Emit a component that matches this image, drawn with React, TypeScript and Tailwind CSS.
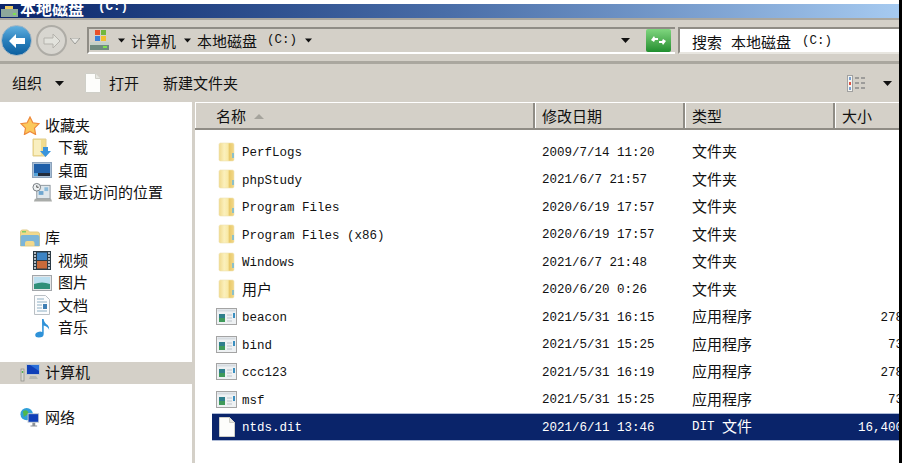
import type { ReactNode } from 'react'

const cjk = '[font-family:"Noto_Sans_CJK_SC","Liberation_Sans",sans-serif]'
const mono = '[font-family:"Liberation_Mono","Noto_Sans_CJK_SC",monospace]'

function Arrow({ className = '' }: { className?: string }) {
  return (
    <svg width="9" height="5" viewBox="0 0 9 5" className={className}>
      <path d="M0 0h9L4.5 5z" fill="#111" />
    </svg>
  )
}

// the (C:) part of the drive name is drawn in the narrow latin face
function DriveLetter({ className = '' }: { className?: string }) {
  return <span className={`whitespace-pre text-[12.5px] leading-none text-[#111] ${mono} ${className}`}>(C:)</span>
}

function Folder() {
  return (
    <svg width="17" height="20" viewBox="0 0 17 20">
      <defs>
        <linearGradient id="fold" x1="0" y1="0" x2="1" y2="0">
          <stop offset="0" stopColor="#f0d98c" />
          <stop offset="0.35" stopColor="#fbf0bc" />
          <stop offset="0.62" stopColor="#f8e8a4" />
          <stop offset="0.66" stopColor="#e8c868" />
          <stop offset="1" stopColor="#f2d88a" />
        </linearGradient>
      </defs>
      <path d="M1 2.500q0-1.500 1.500-1.500h12q1.500 0 1.500 1.500v15q0 1.500-1.500 1.500h-12Q1 19 1 17.500z" fill="url(#fold)" stroke="#efe3b4" strokeWidth="0.6" />
      <rect x="14" y="11" width="2" height="5" fill="#8cc0c8" />
    </svg>
  )
}

function Exe() {
  return (
    <svg width="21" height="17" viewBox="0 0 21 17">
      <rect x="0.5" y="0.5" width="20" height="16" fill="#eef1f3" stroke="#a4a4a4" />
      <rect x="1.500" y="1.500" width="18" height="2" fill="#d6dce1" />
      <rect x="3" y="6" width="6" height="8" fill="#2f7f8c" />
      <rect x="3" y="10" width="6" height="4" fill="#3f9a5a" />
      <path d="M11 7h5M11 10h5M11 13h5" stroke="#bcc3ca" />
      <rect x="17" y="5" width="2" height="5" fill="#3a8fc0" />
    </svg>
  )
}

function Doc() {
  return (
    <svg width="16" height="20" viewBox="0 0 16 20">
      <path d="M0.5 0.5h10l5 5v14h-15z" fill="#fdfdfb" stroke="#cfcfc8" />
      <path d="M10.5 0.5v5h5" fill="#e6e6e0" stroke="#cfcfc8" />
    </svg>
  )
}

function NavIcon({ name }: { name: string }) {
  switch (name) {
    case 'star':
      return (
        <svg width="20" height="19" viewBox="0 0 20 19">
          <path d="M10 1l2.800 5.800 6.200.9-4.500 4.400 1.100 6.400L10 15.400l-5.600 3.100 1.100-6.400L1 7.700l6.200-.9z" fill="#fbc95c" stroke="#ee8a3c" strokeWidth="1.200" />
        </svg>
      )
    case 'download':
      return (
        <svg width="20" height="20" viewBox="0 0 20 20">
          <path d="M1 1h13v17H1z" fill="#f2dc8e" stroke="#e0cd8c" />
          <path d="M2 2h7v15H2z" fill="#f9efc0" />
          <path d="M11 9h5v4h3l-5.500 6L8 13h3z" fill="#3a94dc" />
        </svg>
      )
    case 'desktop':
      return (
        <svg width="20" height="17" viewBox="0 0 20 17">
          <rect x="0.5" y="0.5" width="19" height="15" fill="#a9c0d8" stroke="#8da3bb" />
          <rect x="2" y="2" width="16" height="12" fill="#1f5fa8" />
          <rect x="2" y="11" width="16" height="3" fill="#222c3c" />
          <rect x="2" y="11" width="4" height="3" fill="#4fa0d8" />
        </svg>
      )
    case 'recent':
      return (
        <svg width="21" height="21" viewBox="0 0 21 21">
          <rect x="5" y="3" width="14" height="14" fill="#dfe7ec" stroke="#8e979e" />
          <circle cx="5" cy="5" r="4" fill="#eef1f2" stroke="#73797e" />
          <path d="M5 3v2h2" stroke="#444" fill="none" />
          <rect x="7" y="9" width="5" height="4" fill="#6fa6cf" />
          <rect x="13" y="5" width="4" height="4" fill="#8cbbda" />
          <path d="M3 17h17l1 3H2z" fill="#a9aca9" />
        </svg>
      )
    case 'library':
      return (
        <svg width="20" height="18" viewBox="0 0 20 18">
          <path d="M0.5 3q0-2 2-2h5l2 2h8q2 0 2 2v12H.5z" fill="#f2d98b" stroke="#e0cb88" />
          <path d="M0.5 17V8q0-2 2-2h15q2 0 2 2v9h-5v-3q0-2-2-2H7q-2 0-2 2v3z" fill="#7cb5d8" />
          <rect x="2" y="2" width="4" height="1.500" fill="#7fce6a" />
        </svg>
      )
    case 'video':
      return (
        <svg width="18" height="19" viewBox="0 0 18 19">
          <rect width="18" height="19" fill="#2b3a44" />
          <rect x="4" y="1.500" width="10" height="7.500" fill="#3d84c4" />
          <rect x="4" y="10" width="10" height="7.500" fill="#c86a3a" />
          <path d="M1 2h2M1 5h2M1 8h2M1 11h2M1 14h2M1 17h2M15 2h2M15 5h2M15 8h2M15 11h2M15 14h2M15 17h2" stroke="#dfe8ee" strokeWidth="1.300" />
        </svg>
      )
    case 'picture':
      return (
        <svg width="20" height="16" viewBox="0 0 20 16">
          <rect x="0.5" y="0.5" width="19" height="15" fill="#e4e6e8" stroke="#a2a6aa" />
          <rect x="2" y="2" width="16" height="12" fill="#bcdff0" />
          <path d="M2 9q8-3 16 0v5H2z" fill="#2f8f7a" />
        </svg>
      )
    case 'document':
      return (
        <svg width="16" height="20" viewBox="0 0 16 20">
          <path d="M0.5 0.5h11l4 4v15H.5z" fill="#fbfcfd" stroke="#b9bfc4" />
          <path d="M3 4h7M3 7h10M3 10h5M3 13h5M3 16h10" stroke="#8fb0c4" />
          <rect x="9" y="9" width="4" height="5" fill="#3f7fb4" />
        </svg>
      )
    case 'music':
      return (
        <svg width="17" height="20" viewBox="0 0 17 20">
          <path d="M8 1h1.600q.6 4 4 6 2 2 1.600 5-1-3.500-5.500-4.500V16q0 3.500-5 3.500-3.500 0-3.500-2.500 0-3 5-3.500 1 0 2 .5z" fill="#2f92d8" />
        </svg>
      )
    case 'computer':
      return (
        <svg width="20" height="19" viewBox="0 0 20 19">
          <rect x="1" y="6" width="3" height="12" fill="#d9d9d2" stroke="#8a8a84" strokeWidth="0.7" />
          <rect x="1.800" y="8" width="1.400" height="2" fill="#58b050" />
          <rect x="6" y="1" width="14" height="11" fill="#bcc6cf" />
          <rect x="7" y="2" width="12" height="9" fill="#0f3fb8" />
          <path d="M10 2h9v6z" fill="#2a6fd8" />
          <path d="M10 13h6l2 3H9z" fill="#b5b7b2" />
        </svg>
      )
    default:
      return (
        <svg width="21" height="21" viewBox="0 0 21 21">
          <circle cx="7" cy="7" r="6.500" fill="#2f9fd8" />
          <path d="M3 4q3-2 5 0t-1 4-3 2zM8 10q3-1 4 1l-3 2z" fill="#4fb84c" />
          <rect x="8" y="6" width="12" height="10" fill="#bcc6cf" />
          <rect x="9" y="7" width="10" height="8" fill="#0f3fb8" />
          <path d="M13 16h3v3h2v1h-7v-1h2z" fill="#8b9096" />
        </svg>
      )
  }
}

function NavRow({ icon, label, sub, active }: { icon: string; label: string; sub?: boolean; active?: boolean }) {
  return (
    <div className={`flex h-[22.5px] items-center ${active ? 'bg-[#d4d0c8]' : ''} ${sub ? 'pl-8' : 'pl-5'}`}>
      <span className="flex w-5 justify-center">
        <NavIcon name={icon} />
      </span>
      <span className={`${sub ? 'ml-[6px]' : 'ml-[5px]'} pb-[2px] text-[15px] leading-none text-[#111]`}>{label}</span>
    </div>
  )
}

type FileRow = {
  name: string
  date: string
  type: string
  typePrefix?: string
  size?: string
  kind: 'folder' | 'exe' | 'doc'
  selected?: boolean
}

const files: FileRow[] = [
  { name: 'PerfLogs', date: '2009/7/14 11:20', type: '文件夹', kind: 'folder' },
  { name: 'phpStudy', date: '2021/6/7 21:57', type: '文件夹', kind: 'folder' },
  { name: 'Program Files', date: '2020/6/19 17:57', type: '文件夹', kind: 'folder' },
  { name: 'Program Files (x86)', date: '2020/6/19 17:57', type: '文件夹', kind: 'folder' },
  { name: 'Windows', date: '2021/6/7 21:48', type: '文件夹', kind: 'folder' },
  { name: '用户', date: '2020/6/20 0:26', type: '文件夹', kind: 'folder' },
  { name: 'beacon', date: '2021/5/31 16:15', type: '应用程序', size: '278', kind: 'exe' },
  { name: 'bind', date: '2021/5/31 15:25', type: '应用程序', size: '73', kind: 'exe' },
  { name: 'ccc123', date: '2021/5/31 16:19', type: '应用程序', size: '278', kind: 'exe' },
  { name: 'msf', date: '2021/5/31 15:25', type: '应用程序', size: '73', kind: 'exe' },
  { name: 'ntds.dit', date: '2021/6/11 13:46', type: '文件', typePrefix: 'DIT ', size: '16,400', kind: 'doc', selected: true },
]

function HeaderCell({ width, children }: { width: string; children: ReactNode }) {
  return (
    <div className={`flex h-full shrink-0 items-center border-l border-r-2 border-l-white border-r-[#8f8c85] pl-[6px] pt-[2px] text-[15px] ${width}`}>
      {children}
    </div>
  )
}

export default function App() {
  return (
    <div className="flex h-[463px] w-[902px] overflow-hidden bg-white">
      <div className={`flex h-full w-[899px] shrink-0 flex-col overflow-hidden ${cjk}`}>
        {/* title bar */}
        <div className="mt-1 flex h-[14px] shrink-0 items-center overflow-hidden bg-gradient-to-r from-[#0a246a] via-[#4a6ea8] to-[#a6caf0]">
          <svg width="17" height="11" viewBox="0 0 17 11" className="ml-[1px] shrink-0">
            <rect x="4" y="0" width="8" height="3" fill="#e8c860" />
            <rect x="0" y="3" width="17" height="8" fill="#8ea89c" />
            <rect x="12" y="7" width="3" height="2" fill="#7ce050" />
          </svg>
          <span className="-mt-[7px] ml-[2px] whitespace-pre text-[16px] font-bold leading-none text-white">本地磁盘</span>
          <span className={`-mt-[7px] ml-[14px] whitespace-pre text-[12.5px] font-bold leading-none text-white ${mono}`}>(C:)</span>
        </div>

        {/* address bar */}
        <div className="flex h-[46px] shrink-0 items-center border-b-[3px] border-t-[2px] border-b-[#aaa79f] border-t-[#aaa79f] bg-[#d4d0c8]">
          <div className="ml-[1px] flex h-[31px] w-[31px] shrink-0 items-center justify-center rounded-full border border-[#9fb4c4] bg-gradient-to-b from-[#5fb0e0] via-[#2a80bc] to-[#0a5f9f]">
            <svg width="18" height="16" viewBox="0 0 18 16"><path d="M8 1L1 8l7 7v-4h9V5H8z" fill="#fff" /></svg>
          </div>
          <div className="ml-[4px] flex h-[31px] w-[31px] shrink-0 items-center justify-center rounded-full border-2 border-[#aeaca6] bg-[#d8d6d0]">
            <svg width="18" height="16" viewBox="0 0 18 16"><path d="M10 1l7 7-7 7v-4H1V5h9z" fill="#e2e2dc" stroke="#b4b2ac" /></svg>
          </div>
          <svg width="10" height="6" viewBox="0 0 10 6" className="ml-[3px] shrink-0"><path d="M0 0h10L5 6z" fill="#e8e8e4" stroke="#9b9b96" /></svg>
          <div className="ml-[7px] flex h-[27px] w-[559px] shrink-0 items-center border-b-2 border-l-2 border-t-2 border-b-white border-l-[#8f8c85] border-t-[#8f8c85]">
            <svg width="21" height="21" viewBox="0 0 21 21" className="shrink-0">
              <rect x="6" y="0" width="5" height="5" fill="#e8502a" />
              <rect x="12" y="0" width="5" height="5" fill="#70b840" />
              <rect x="6" y="6" width="5" height="5" fill="#3a80d8" />
              <rect x="12" y="6" width="5" height="5" fill="#f2c030" />
              <rect x="1" y="12" width="19" height="8" fill="#6f8a80" />
              <rect x="1" y="12" width="19" height="3" fill="#c4d0c8" />
              <rect x="14" y="16" width="4" height="2" fill="#7ce050" />
            </svg>
            <Arrow className="ml-[8px] w-[7px] shrink-0" />
            <span className="ml-[6px] pb-[1px] text-[15px] leading-none text-[#111]">计算机</span>
            <Arrow className="ml-[8px] w-[7px] shrink-0" />
            <span className="ml-[6px] pb-[1px] whitespace-nowrap text-[15px] leading-none text-[#111]">本地磁盘</span>
            <DriveLetter className="ml-[10px]" />
            <Arrow className="ml-[8px] w-[7px] shrink-0" />
            <Arrow className="ml-auto mr-[16px] w-[9px] shrink-0" />
          </div>
          <div className="flex h-[27px] w-[29px] shrink-0 items-center border-b-2 border-t-2 border-b-white border-t-[#8f8c85]">
            <div className="flex h-[23px] w-[25px] items-center justify-center rounded-[2px] bg-gradient-to-b from-[#7fd67f] to-[#1f8f2f]">
              <svg width="17" height="13" viewBox="0 0 17 13">
                <path d="M1 6l3-4 1 2h3v2H5l-1 2zM16 7l-3 4-1-2H9V7h3l1-2z" fill="#fff" />
              </svg>
            </div>
          </div>
          <div className="ml-[3px] flex h-[27px] min-w-0 flex-1 items-center border-b-2 border-l-2 border-t-2 border-b-[#e8e6e0] border-l-[#8f8c85] border-t-[#8f8c85] bg-white pl-[12px] pt-[1px]">
            <span className="text-[15px] leading-none text-[#111]">搜索</span>
            <span className="ml-[9px] text-[15px] leading-none text-[#111]">本地磁盘</span>
            <DriveLetter className="ml-[11px]" />
          </div>
        </div>

        {/* command bar */}
        <div className="flex h-[38px] shrink-0 items-center bg-[#d4d0c8] text-[15px] text-[#111]">
          <span className="ml-3">组织</span>
          <Arrow className="ml-[13px]" />
          <span className="ml-[21px]"><Doc /></span>
          <span className="ml-[8px]">打开</span>
          <span className="ml-[24px]">新建文件夹</span>
          <svg width="19" height="19" viewBox="0 0 19 19" className="ml-auto">
            <rect x="0.5" y="1.500" width="5" height="16" fill="#f4f4f0" stroke="#a0a0a0" />
            <rect x="2" y="3" width="2" height="3" fill="#7a9fd0" />
            <rect x="2" y="8" width="2" height="3" fill="#e05040" />
            <rect x="2" y="13" width="2" height="3" fill="#7a9fd0" />
            <path d="M8 4h4M14 4h4M8 9h4M14 9h4M8 14h4M14 14h4" stroke="#8a8a8a" strokeWidth="1.500" />
          </svg>
          <Arrow className="ml-[17px] mr-[7px]" />
        </div>

        <div className="flex min-h-0 flex-1">
          {/* nav pane */}
          <div className="w-[192px] shrink-0 pt-3">
            <NavRow icon="star" label="收藏夹" />
            <NavRow icon="download" label="下载" sub />
            <NavRow icon="desktop" label="桌面" sub />
            <NavRow icon="recent" label="最近访问的位置" sub />
            <div className="h-[22.5px]" />
            <NavRow icon="library" label="库" />
            <NavRow icon="video" label="视频" sub />
            <NavRow icon="picture" label="图片" sub />
            <NavRow icon="document" label="文档" sub />
            <NavRow icon="music" label="音乐" sub />
            <div className="h-[22.5px]" />
            <NavRow icon="computer" label="计算机" active />
            <div className="h-[22.5px]" />
            <NavRow icon="network" label="网络" />
          </div>
          <div className="w-[3px] shrink-0 bg-[#d4d0c8]" />

          {/* file list */}
          <div className="min-w-0 flex-1 overflow-hidden">
            <div className="flex h-[28px] border-b-2 border-t border-b-[#8f8c85] border-t-white bg-[#d4d0c8] text-[#111]">
              <HeaderCell width="w-[340px] pl-[20px]">
                <span>名称</span>
                <svg width="10" height="5" viewBox="0 0 10 5" className="ml-[8px]"><path d="M5 0l5 5H0z" fill="#a5a39c" /></svg>
              </HeaderCell>
              <HeaderCell width="w-[150px]">修改日期</HeaderCell>
              <HeaderCell width="w-[150px]">类型</HeaderCell>
              <div className="flex flex-1 items-center border-l border-l-white pl-[6px] pt-[2px] text-[15px]">大小</div>
            </div>
            <div className="mt-[8px] pl-[17px]">
              {files.map((f) => (
                <div
                  key={f.name}
                  className={`flex h-[27.5px] items-center ${f.selected ? 'border-y border-y-[#aebbd6] bg-[#0a246a] text-white' : 'text-[#111]'}`}
                >
                  <span className="flex w-[29px] shrink-0 justify-center">
                    {f.kind === 'folder' && <Folder />}
                    {f.kind === 'exe' && <Exe />}
                    {f.kind === 'doc' && <Doc />}
                  </span>
                  {f.name === '用户' ? (
                    <span className="w-[301px] shrink-0 pb-[1px] pl-[1px] text-[15px]">{f.name}</span>
                  ) : (
                    <span className={`w-[301px] shrink-0 whitespace-pre pl-[1px] pt-[4px] text-[12.5px] ${mono}`}>{f.name}</span>
                  )}
                  <span className={`w-[150px] shrink-0 whitespace-pre pt-[3px] text-[12.5px] ${mono}`}>{f.date}</span>
                  <span className="flex w-[150px] shrink-0 items-center pb-[1px] text-[15px]">
                    {f.typePrefix && <span className={`whitespace-pre pt-[3px] text-[12.5px] ${mono}`}>{f.typePrefix}</span>}
                    {f.type}
                  </span>
                  <span className={`-mr-[4px] ml-auto w-[67px] whitespace-pre pt-[3px] text-right text-[12.5px] ${mono}`}>{f.size}</span>
                </div>
              ))}
            </div>
          </div>
        </div>
      </div>
      {/* black strip along the right edge of the capture */}
      <div className="w-[3px] shrink-0 bg-black" />
    </div>
  )
}
